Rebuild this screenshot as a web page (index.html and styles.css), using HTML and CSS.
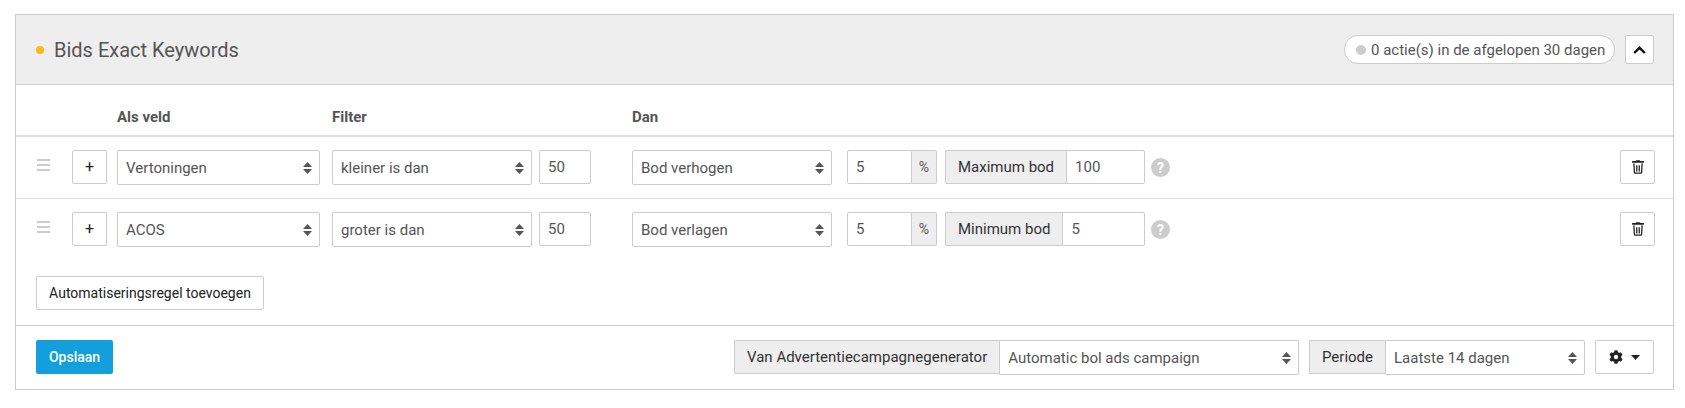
FILE: index.html
```html
<!DOCTYPE html>
<html lang="nl">
<head>
<meta charset="utf-8">
<title>Bids Exact Keywords</title>
<link rel="stylesheet" href="styles.css">
</head>
<body>
<section class="panel">
  <header class="panel-head">
    <h2 class="title"><span class="dot"></span>Bids Exact Keywords</h2>
    <div class="pill"><span class="pill-dot"></span>0 actie(s) in de afgelopen 30 dagen</div>
    <button class="btn btn-chevron" type="button" aria-label="Inklappen">
      <svg width="13" height="8" viewBox="0 0 13 8"><path d="M1.200 7 6.500 1.800 11.800 7" fill="none" stroke="#111" stroke-width="2.400"/></svg>
    </button>
  </header>

  <div class="rule-row rule-head">
    <span></span><span></span>
    <span class="col-label">Als veld</span>
    <span class="col-label">Filter</span>
    <span></span>
    <span class="col-label">Dan</span>
  </div>

  <div class="rule-row rule">
    <svg class="drag" width="13" height="12" viewBox="0 0 13 12"><path d="M0 1h13M0 6h13M0 11h13" stroke="#ccc" stroke-width="2"/></svg>
    <button class="btn btn-plus" type="button">+</button>
    <select class="field w-field"><option>Vertoningen</option></select>
    <select class="field w-filter"><option>kleiner is dan</option></select>
    <input class="field w-value" value="50">
    <div class="action">
      <select class="field action-select"><option>Bod verhogen</option></select>
      <div class="group pct"><input class="field" value="5"><span class="addon addon-light">%</span></div>
      <div class="group limit"><span class="addon">Maximum bod</span><input class="field" value="100"></div>
      <span class="help">?</span>
    </div>
    <button class="btn btn-trash" type="button" aria-label="Verwijderen">
      <svg width="12" height="14" viewBox="0 0 448 512"><path fill="#222" d="M432 32H312l-9.400-18.700A24 24 0 0 0 281.100 0H166.800a23.700 23.700 0 0 0-21.400 13.300L136 32H16A16 16 0 0 0 0 48v32a16 16 0 0 0 16 16h416a16 16 0 0 0 16-16V48a16 16 0 0 0-16-16z"/><path fill="none" stroke="#222" stroke-width="48" d="M70 120l20 340a28 28 0 0 0 28 28h212a28 28 0 0 0 28-28l20-340M178 190v230M270 190v230"/></svg>
    </button>
  </div>

  <div class="rule-row rule">
    <svg class="drag" width="13" height="12" viewBox="0 0 13 12"><path d="M0 1h13M0 6h13M0 11h13" stroke="#ccc" stroke-width="2"/></svg>
    <button class="btn btn-plus" type="button">+</button>
    <select class="field w-field"><option>ACOS</option></select>
    <select class="field w-filter"><option>groter is dan</option></select>
    <input class="field w-value" value="50">
    <div class="action">
      <select class="field action-select"><option>Bod verlagen</option></select>
      <div class="group pct"><input class="field" value="5"><span class="addon addon-light">%</span></div>
      <div class="group limit"><span class="addon">Minimum bod</span><input class="field" value="5"></div>
      <span class="help">?</span>
    </div>
    <button class="btn btn-trash" type="button" aria-label="Verwijderen">
      <svg width="12" height="14" viewBox="0 0 448 512"><path fill="#222" d="M432 32H312l-9.400-18.700A24 24 0 0 0 281.100 0H166.800a23.700 23.700 0 0 0-21.400 13.300L136 32H16A16 16 0 0 0 0 48v32a16 16 0 0 0 16 16h416a16 16 0 0 0 16-16V48a16 16 0 0 0-16-16z"/><path fill="none" stroke="#222" stroke-width="48" d="M70 120l20 340a28 28 0 0 0 28 28h212a28 28 0 0 0 28-28l20-340M178 190v230M270 190v230"/></svg>
    </button>
  </div>

  <div class="add-row">
    <button class="btn btn-add" type="button">Automatiseringsregel toevoegen</button>
  </div>

  <footer class="panel-foot">
    <button class="btn-save" type="button">Opslaan</button>
    <div class="foot-right">
      <div class="group gen"><span class="addon">Van Advertentiecampagnegenerator</span><select class="field"><option>Automatic bol ads campaign</option></select></div>
      <div class="group period"><span class="addon">Periode</span><select class="field"><option>Laatste 14 dagen</option></select></div>
      <button class="btn btn-gear" type="button" aria-label="Instellingen">
        <svg width="14" height="14" viewBox="0 0 512 512"><path fill="#222" d="M487.400 315.700l-42.600-24.600a192.600 192.600 0 0 0 0-70.200l42.600-24.600a12 12 0 0 0 5.500-14 249 249 0 0 0-54.700-94.600 12 12 0 0 0-14.800-2.300l-42.600 24.600a188.800 188.800 0 0 0-60.800-35.100V25.700a12 12 0 0 0-9.400-11.700 251.400 251.400 0 0 0-109.200 0 12 12 0 0 0-9.400 11.700V75a194.600 194.600 0 0 0-60.800 35.100L88.700 85.500a12 12 0 0 0-14.800 2.300 247.500 247.500 0 0 0-54.700 94.600 12 12 0 0 0 5.500 14l42.600 24.600a192.600 192.600 0 0 0 0 70.200l-42.600 24.600a12 12 0 0 0-5.500 14 249 249 0 0 0 54.700 94.600 12 12 0 0 0 14.800 2.300l42.600-24.600a188.800 188.800 0 0 0 60.800 35.100v49.200a12 12 0 0 0 9.400 11.700 251.400 251.400 0 0 0 109.200 0 12 12 0 0 0 9.400-11.700V437a194.600 194.600 0 0 0 60.800-35.100l42.600 24.600a12 12 0 0 0 14.800-2.300 247.500 247.500 0 0 0 54.700-94.600 12 12 0 0 0-5.500-14zM256 336a80 80 0 1 1 0-160 80 80 0 0 1 0 160z"/></svg>
        <svg width="9" height="5" viewBox="0 0 9 5"><path d="M0 0h9L4.500 5z" fill="#222"/></svg>
      </button>
    </div>
  </footer>
</section>
</body>
</html>
```
FILE: styles.css
```css
* { box-sizing: border-box; }
html, body { margin: 0; padding: 0; background: #fff; }
body {
  width: 1685px;
  height: 408px;
  overflow: hidden;
  padding: 14px 0 0 15px;
  font-family: Roboto, "Liberation Sans", sans-serif;
  font-size: 15px;
  color: #555;
}
.panel {
  width: 1659px;
  height: 376px;
  border: 1px solid #ccc;
  display: flex;
  flex-direction: column;
}
.panel-head {
  height: 70px;
  background: #eee;
  border-bottom: 1px solid #ccc;
  display: flex;
  align-items: center;
  padding: 0 19px 0 20px;
}
.title {
  margin: 0 auto 0 0;
  font-size: 20px;
  font-weight: 400;
  color: #555;
  display: flex;
  align-items: center;
}
.dot {
  width: 8px;
  height: 8px;
  border-radius: 50%;
  background: #fdb913;
  margin-right: 10px;
}
.pill {
  height: 29px;
  width: 271px;
  background: #fff;
  border: 1px solid #ccc;
  border-radius: 14px;
  display: flex;
  align-items: center;
  padding-left: 11px;
  color: #555;
  white-space: nowrap;
}
.pill-dot {
  width: 10px;
  height: 10px;
  border-radius: 50%;
  background: #ccc;
  margin-right: 5px;
}
.btn {
  background: #fff;
  border: 1px solid #ccc;
  border-radius: 2px;
  font: inherit;
  color: #222;
  padding: 0;
  display: flex;
  align-items: center;
  justify-content: center;
}
.btn-chevron { width: 29px; height: 29px; margin-left: 10px; }
.rule-row {
  display: grid;
  grid-template-columns: 35px 45px 215px 207px 93px 1fr 35px;
  padding: 0 18px 0 21px;
}
.rule-head {
  height: 52px;
  border-bottom: 2px solid #ddd;
  padding-top: 13px;
  align-items: center;
}
.col-label { font-weight: 700; color: #555; }
.rule {
  height: 62px;
  border-bottom: 1px solid #ddd;
  padding-top: 13px;
  align-items: start;
}
.rule:nth-of-type(3) { border-bottom: 0; height: 61px; }
.drag { display: block; margin-top: 9px; }
.btn-plus { width: 35px; height: 34px; font-size: 16px; line-height: 1; }
.field {
  height: 34px;
  border: 1px solid #ccc;
  border-radius: 2px;
  background: #fff;
  color: #555;
  font: inherit;
  padding: 0 8px;
  width: 100%;
  outline: 0;
}
select.field {
  height: 35px;
  appearance: none;
  -webkit-appearance: none;
  padding-right: 22px;
  background-image: url("data:image/svg+xml,%3Csvg xmlns='http://www.w3.org/2000/svg' width='9' height='12' viewBox='0 0 9 12'%3E%3Cpath d='M4.500 0 9 5H0zM4.500 12 0 7h9z' fill='%23555'/%3E%3C/svg%3E");
  background-repeat: no-repeat;
  background-position: right 7px center;
}
.w-field { width: 203px; }
.w-filter { width: 200px; }
.w-value { width: 52px; }
.action { display: flex; align-items: flex-start; }
.action-select { width: 200px; }
.group { display: flex; align-items: flex-start; height: 34px; }
.group .field { border-radius: 0 2px 2px 0; flex: 1; min-width: 0; }
.addon {
  display: flex;
  align-items: center;
  height: 34px;
  background: #eee;
  border: 1px solid #ccc;
  border-right: 0;
  border-radius: 2px 0 0 2px;
  padding: 0 12px;
  color: #333;
  white-space: nowrap;
}
.pct .addon-light {
  border-left: 0;
  border-right: 1px solid #ccc;
  border-radius: 0 2px 2px 0;
  padding: 0;
  width: 25px;
  justify-content: center;
  color: #555;
  font-size: 14px;
}
.pct { width: 90px; margin-left: 15px; }
.pct .field { border-radius: 2px 0 0 2px; }
.limit { width: 200px; margin-left: 8px; }
.help {
  width: 19px;
  height: 19px;
  margin: 8px 0 0 6px;
  border-radius: 50%;
  background: #ccc;
  color: #fff;
  font-weight: 700;
  font-size: 14px;
  display: flex;
  align-items: center;
  justify-content: center;
}
.btn-trash { width: 35px; height: 34px; }
.add-row { flex: 1; padding: 16px 20px 0; }
.btn-add { height: 34px; width: 228px; font-size: 14px; }
.panel-foot {
  height: 64px;
  border-top: 1px solid #ccc;
  display: flex;
  align-items: flex-start;
  justify-content: space-between;
  padding: 14px 19px 0 20px;
}
.btn-save {
  width: 77px;
  height: 34px;
  background: #129fdb;
  border: 0;
  border-radius: 2px;
  color: #fff;
  font: inherit;
  font-size: 14px;
  font-weight: 500;
}
.foot-right { display: flex; }
.gen { width: 565px; }
.period { width: 276px; margin-left: 10px; }
.btn-gear { width: 59px; height: 34px; margin-left: 10px; gap: 8px; }
```
